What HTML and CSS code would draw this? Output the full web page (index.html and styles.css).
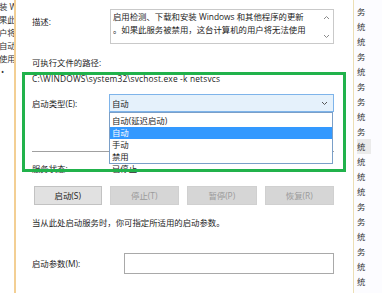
FILE: index.html
```html
<!DOCTYPE html>
<html>
<head>
<meta charset="utf-8">
<link rel="stylesheet" href="styles.css">
</head>
<body>
<div class="screen">
  <div class="left-strip">
    <div class="ls-line">装 Windows</div>
    <div class="ls-line">果此服务</div>
    <div class="ls-line">户将无法</div>
    <div class="ls-line">自动</div>
    <div class="ls-line">使用</div>
    <div class="ls-line ls-dot">•</div>
  </div>
  <div class="dialog">
    <div class="desc-row">
      <div class="label desc-label">描述:</div>
      <div class="desc-box">
        <div class="desc-text">启用检测、下载和安装 Windows 和其他程序的更新<br>。如果此服务被禁用，这台计算机的用户将无法使用</div>
        <div class="scroll">
          <svg width="7" height="5" viewBox="0 0 7 5"><polyline points="1,4 3.5,1.5 6,4" fill="none" stroke="#8a8a8a" stroke-width="1"/></svg>
          <svg width="7" height="5" viewBox="0 0 7 5"><polyline points="1,1 3.5,3.5 6,1" fill="none" stroke="#8a8a8a" stroke-width="1"/></svg>
        </div>
      </div>
    </div>
    <div class="path-label">可执行文件的路径:</div>
    <div class="path">C:\WINDOWS\system32\svchost.exe -k netsvcs</div>
    <div class="field-row type-row">
      <div class="label">启动类型(E):</div>
      <div class="select">
        <span>自动</span>
        <svg class="chev" width="7" height="5" viewBox="0 0 7 5"><polyline points="1,1 3.5,3.5 6,1" fill="none" stroke="#555" stroke-width="1"/></svg>
        <ul class="options">
          <li>自动(延迟启动)</li>
          <li class="selected">自动</li>
          <li>手动</li>
          <li>禁用</li>
        </ul>
      </div>
    </div>
    <div class="separator"></div>
    <div class="field-row status-row">
      <div class="label">服务状态:</div>
      <div>已停止</div>
    </div>
    <div class="buttons">
      <div class="btn">启动(S)</div>
      <div class="btn disabled">停止(T)</div>
      <div class="btn disabled">暂停(P)</div>
      <div class="btn disabled">恢复(R)</div>
    </div>
    <div class="hint">当从此处启动服务时，你可指定所适用的启动参数。</div>
    <div class="field-row param-row">
      <div class="label param-label">启动参数(M):</div>
      <div class="param-input"></div>
    </div>
  </div>
  <div class="right-strip">
    <div>务</div><div>统</div><div>统</div><div>务</div><div>统</div><div>务</div><div>务</div><div>统</div><div>务</div><div class="hl">统</div><div>统</div><div>统</div><div>统</div><div>务</div><div>务</div><div>统</div><div>务</div><div>统</div><div>统</div>
  </div>
  <div class="green-box"></div>
</div>
</body>
</html>
```

FILE: styles.css
```css
* { box-sizing: border-box; }
html, body {
  margin: 0;
  padding: 0;
  background: #ffffff;
}
body {
  font-family: "Open Sans", "Noto Sans CJK SC", sans-serif;
  font-size: 8.4px;
  line-height: 13px;
  color: #1c1c1c;
}
.screen {
  position: relative;
  width: 382px;
  height: 293px;
  display: flex;
  overflow: hidden;
}
.left-strip {
  width: 14px;
  flex: none;
  overflow: hidden;
  white-space: nowrap;
  border-right: 2px solid #f3cf94;
  margin-right: 1px;
  box-sizing: content-box;
  color: #333;
  text-indent: -1px;
}
.ls-line { height: 13px; }
.ls-dot { padding-left: 2px; }
.dialog {
  flex: 1;
  padding: 0 19px 0 15px;
  min-width: 0;
}
.label { flex: none; }
.desc-row {
  display: flex;
  margin-top: 9px;
}
.desc-label {
  width: 78px;
  padding-top: 6px;
}
.desc-box {
  flex: 1;
  height: 35px;
  border: 1px solid #c9c9c9;
  display: flex;
  padding-left: 2px;
}
.desc-text {
  flex: 1;
  white-space: nowrap;
  overflow: hidden;
}
.scroll {
  width: 14px;
  display: flex;
  flex-direction: column;
  justify-content: space-between;
  align-items: center;
  padding: 5px 0 4px;
}
.scroll svg { display: block; }
.path-label { margin-top: 12px; }
.path { margin-top: 3px; white-space: nowrap; letter-spacing: 0.17px; }
.field-row {
  display: flex;
  align-items: center;
}
.type-row { margin-top: 9px; }
.type-row .label { width: 77px; }
.select {
  position: relative;
  flex: 1;
  height: 18px;
  background: #e5f1fb;
  border: 1px solid #7eb4ea;
  display: flex;
  align-items: center;
  justify-content: space-between;
  padding: 0 5px 0 2px;
}
.chev { display: block; }
.options {
  position: absolute;
  left: -1px;
  right: 0;
  top: 17px;
  margin: 0;
  padding: 0 0 2px;
  list-style: none;
  background: #ffffff;
  border: 1px solid #7a9fc8;
  height: 52px;
  z-index: 2;
}
.options li {
  height: 12px;
  line-height: 12px;
  padding-left: 2px;
}
.options li:first-child { margin-top: 2px; }
.options li.selected {
  background: #3399ff;
  color: #ffffff;
}
.separator {
  margin-top: 39px;
  height: 1px;
  background: #a0a0a0;
}
.status-row { margin-top: 10px; }
.status-row .label { width: 80px; }
.buttons {
  display: flex;
  gap: 8px;
  margin-top: 11px;
  padding-left: 2px;
}
.btn {
  width: 70px;
  height: 19px;
  line-height: 17px;
  text-align: center;
  background: #e1e1e1;
  border: 1px solid #c2c2c2;
  color: #222;
}
.btn:first-child { width: 68px; }
.btn.disabled {
  background: #d6d6d6;
  border-color: #d0d0d0;
  color: #9a9a9a;
}
.hint { margin-top: 11px; white-space: nowrap; }
.param-row { margin-top: 24px; }
.param-label { width: 92px; }
.param-input {
  flex: 1;
  height: 21px;
  border: 1px solid #a9a9a9;
  background: #fff;
}
.right-strip {
  width: 25px;
  flex: none;
  border-left: 1px solid #ecdfb5;
  box-sizing: content-box;
  background: #fcfcff;
  padding: 4px 0 0 3px;
  line-height: 15px;
  color: #333;
}
.right-strip .hl {
  background: #ebebeb;
  width: 14px;
}
.green-box {
  position: absolute;
  left: 22px;
  top: 72px;
  width: 324px;
  height: 100px;
  border: 3px solid #21b24b;
  z-index: 3;
  pointer-events: none;
}
```
